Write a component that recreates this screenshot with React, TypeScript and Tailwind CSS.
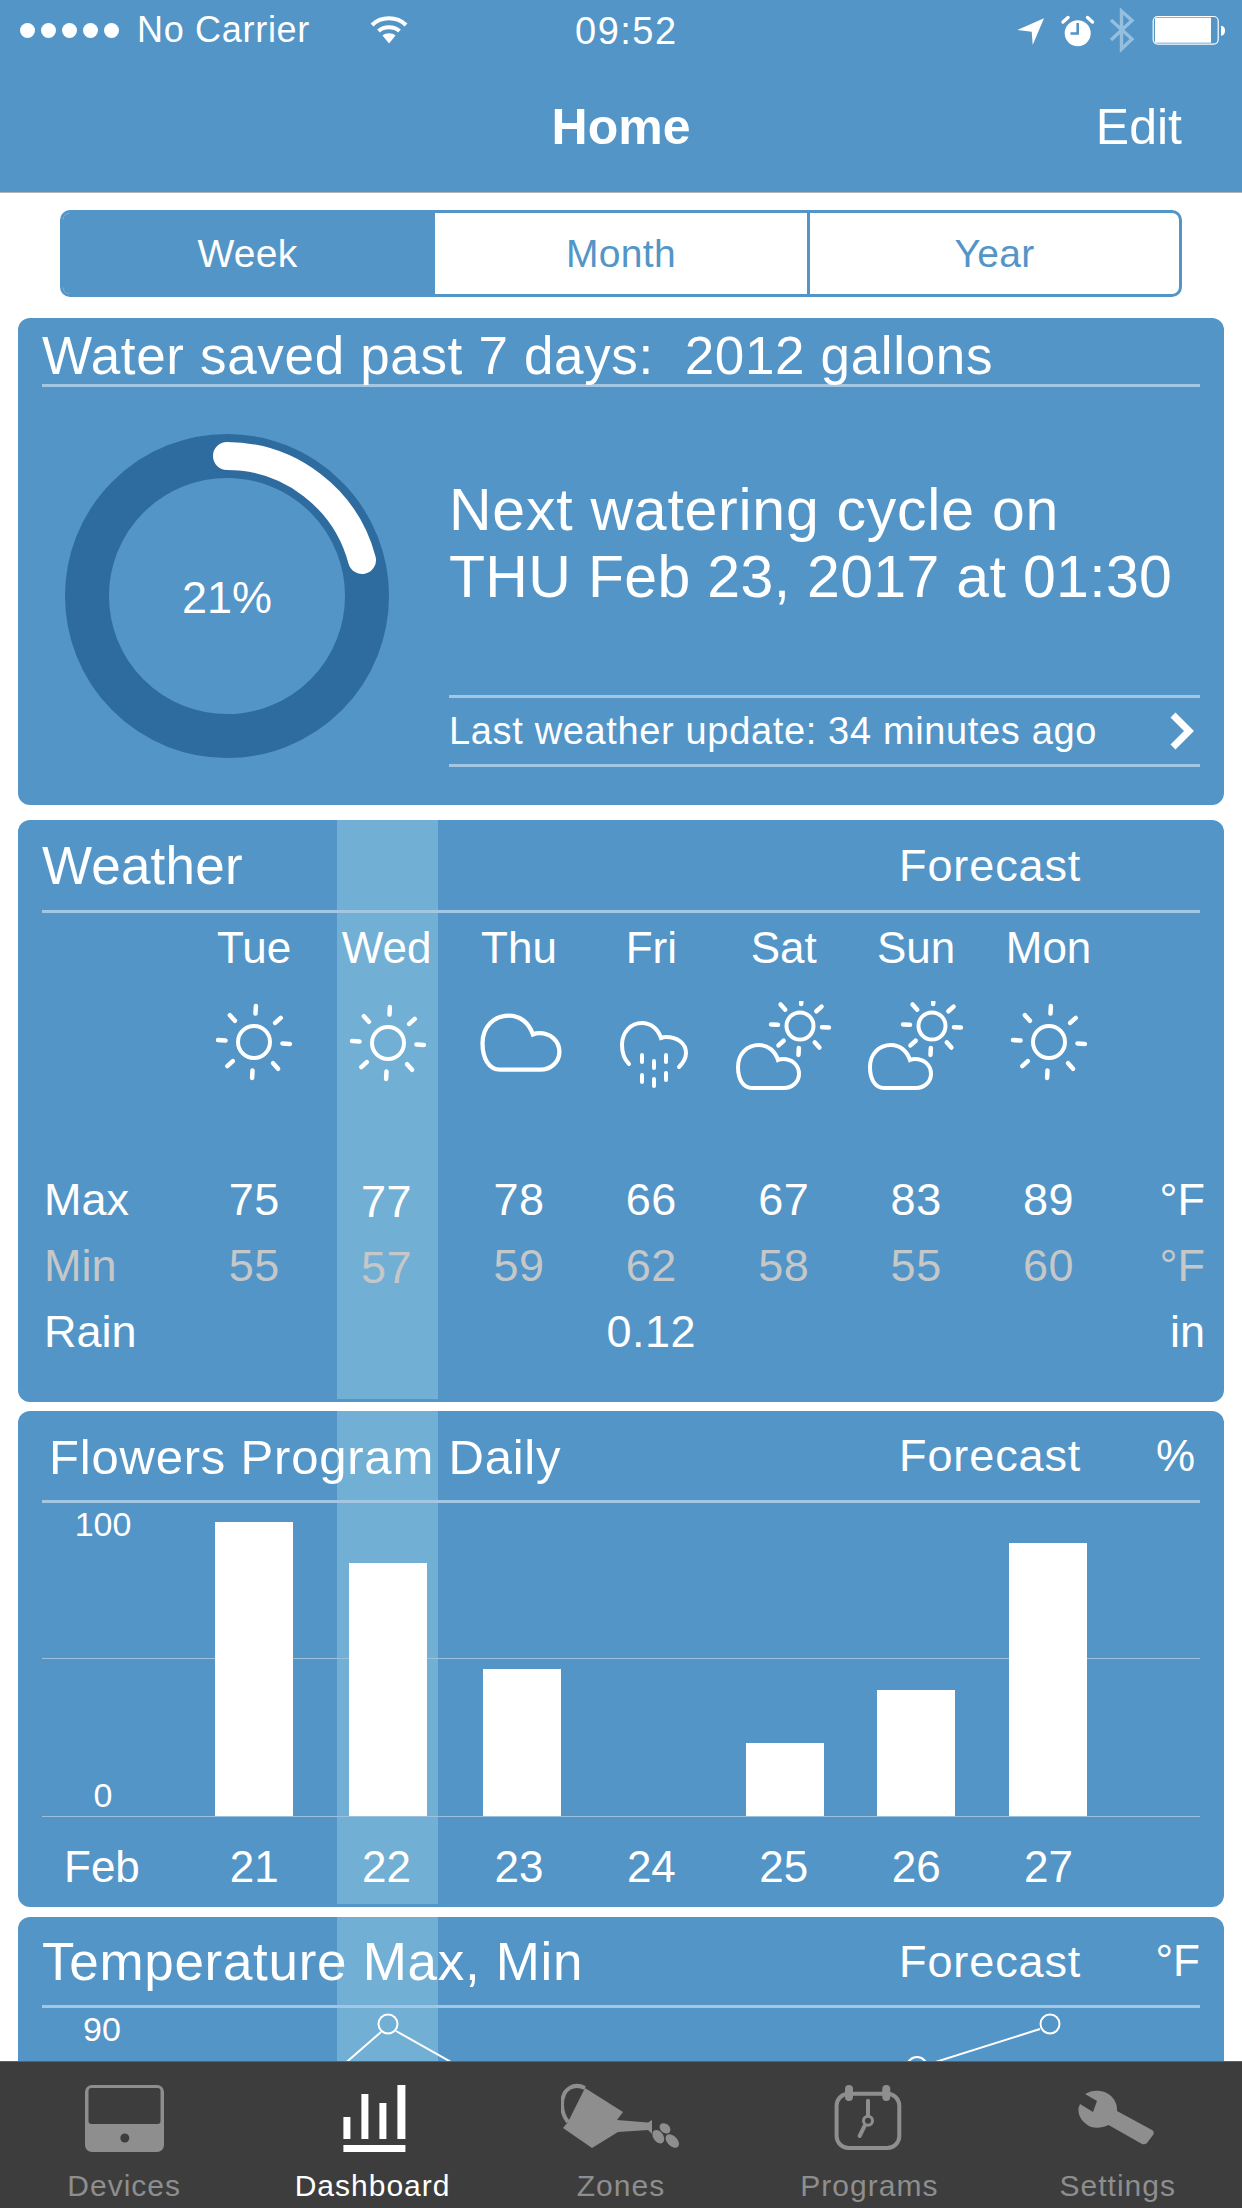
import React from 'react';

const DAYS = ['Tue', 'Wed', 'Thu', 'Fri', 'Sat', 'Sun', 'Mon'];
const MAX = ['75', '77', '78', '66', '67', '83', '89'];
const MIN = ['55', '57', '59', '62', '58', '55', '60'];
const DATES = ['21', '22', '23', '24', '25', '26', '27'];
const BARS = [294, 253, 147, 0, 73, 126, 273];

const CLOUD = 'M16 45 H48 C56 45 63 39 63 31 C63 22 56 16 47 16 C45.5 16 44 16.2 42 17 C39 8 32 2 23 2 C11 2 2 11 2 24 C2 36 7 45 16 45 Z';

const Sun: React.FC<{ cx: number; cy: number; r: number; a: number; b: number }> = ({ cx, cy, r, a, b }) => (
  <g stroke="#fff" fill="none">
    <circle cx={cx} cy={cy} r={r} strokeWidth="4" />
    {[0, 45, 90, 135, 180, 225, 270, 315].map((deg) => {
      const t = ((deg + 3) * Math.PI) / 180;
      return (
        <line
          key={deg}
          x1={cx + a * Math.sin(t)}
          y1={cy - a * Math.cos(t)}
          x2={cx + b * Math.sin(t)}
          y2={cy - b * Math.cos(t)}
          strokeWidth="4.5"
          strokeLinecap="round"
        />
      );
    })}
  </g>
);

const WeatherIcon: React.FC<{ index: number }> = ({ index }) => {
  let inner: React.ReactNode = null;
  if (index === 0 || index === 6) inner = <Sun cx={60} cy={41} r={16} a={28.5} b={36} />;
  if (index === 1) inner = <Sun cx={61} cy={42} r={16} a={28.5} b={36} />;
  if (index === 2) {
    inner = <path d={CLOUD} transform="translate(21 12) scale(1.26)" fill="none" stroke="#fff" strokeWidth="3.4" />;
  }
  if (index === 3) {
    inner = (
      <g stroke="#fff" fill="none" strokeLinecap="round">
        <path d="M38 63 C33 58 31 51 31 44 C31 31 40 22 51 22 C60 22 67 28 70 37 C71.5 36.5 73 36 75 36 C86 36 95 42 95 52 C95 57 92 62 88 66" strokeWidth="4" />
        <path d="M51 54 V61 M51 74 V81 M63 60 V67 M63 78 V85 M75 54 V61 M75 72 V79" strokeWidth="4" />
      </g>
    );
  }
  if (index === 4 || index === 5) {
    inner = (
      <>
        <Sun cx={76} cy={25} r={13.5} a={22} b={29} />
        <path d={CLOUD} transform="translate(12 42)" fill="none" stroke="#fff" strokeWidth="4" />
      </>
    );
  }
  return (
    <svg width="120" height="92" viewBox="0 0 120 92" className="mx-auto block">
      {inner}
    </svg>
  );
};

const Highlight: React.FC = () => (
  <div className="absolute left-[319px] top-0 bottom-[3px] w-[101px] bg-[#72afd5]" />
);

const CardHeader: React.FC<{
  title: string;
  titleClass?: string;
  forecast?: boolean;
  unit?: string;
  unitClass?: string;
  height: string;
}> = ({ title, titleClass, forecast, unit, unitClass, height }) => (
  <div className={`grid grid-cols-[857px_1fr_auto] items-center border-b-[3px] border-[#a3c7e2] ${height}`}>
    <div className={`whitespace-pre leading-none ${titleClass}`}>{title}</div>
    {forecast && <div className="text-[45px] leading-none tracking-[0.9px]">Forecast</div>}
    {unit && <div className={`text-[44px] leading-none ${unitClass}`}>{unit}</div>}
  </div>
);

const WeatherRow: React.FC<{ label: string; values: string[]; unit: string; color?: string }> = ({ label, values, unit, color }) => (
  <div className={`grid grid-cols-[146px_repeat(7,132.4px)_1fr] h-[66px] items-center text-[45px] leading-none ${color}`}>
    <div className="pl-[2px]">{label}</div>
    {values.map((v, i) => (
      <div key={i} className={i === 1 ? 'text-center tracking-[0.5px] mt-[4px]' : 'text-center tracking-[0.5px]'}>
        {v}
      </div>
    ))}
    <div className="text-right -mr-[5px]">{unit}</div>
  </div>
);

const StatusIcons: React.FC = () => (
  <svg width="220" height="50" viewBox="0 0 220 50" className="mr-[12px]">
    <path d="M34 13.3 L7.3 25 L21.7 26.7 L22.7 40 Z" fill="#fff" />
    <circle cx="67.7" cy="28.3" r="13" fill="#fff" />
    <path d="M67.7 18 V28.5 H60.5" stroke="#5395c7" strokeWidth="2.6" fill="none" />
    <path d="M53 17 L58 12.5 M77.5 12.5 L82.5 17" stroke="#fff" strokeWidth="3.4" strokeLinecap="round" />
    <path d="M101 15 L122 34 L111.5 44 V6 L122 15.5 L101 35" stroke="#94bfdf" strokeWidth="3.4" fill="none" />
    <rect x="143.2" y="11.5" width="65" height="27.6" rx="4.5" fill="none" stroke="#fff" strokeWidth="1.2" />
    <rect x="145" y="12.7" width="56" height="25" fill="#fff" />
    <path d="M211 20.7 C214 21 215 23 215 25.7 C215 28 214 30.5 211 30.7 Z" fill="#fff" />
  </svg>
);

const WifiIcon: React.FC = () => (
  <svg width="38" height="28" viewBox="0 0 38 28">
    <path d="M2 9 C11 0 27 0 36 9 M8.5 15 C14 10 24 10 29.5 15" stroke="#fff" strokeWidth="4" fill="none" />
    <path d="M12.5 19.5 C16 16.5 22 16.5 25.5 19.5 L19 27.5 Z" fill="#fff" />
  </svg>
);

const Ring: React.FC = () => (
  <svg width="324" height="324" viewBox="0 0 324 324" className="block">
    <circle cx="162" cy="162" r="140" fill="none" stroke="#2e6ca0" strokeWidth="44" />
    <path d="M162 22 A140 140 0 0 1 297 126" fill="none" stroke="#fff" strokeWidth="28" strokeLinecap="round" />
  </svg>
);

const TAB_GREY = '#8e8e8e';

const TABS: { label: string; active?: boolean; icon: React.ReactNode }[] = [
  {
    label: 'Devices',
    icon: (
      <>
        <rect x="21" y="2" width="79" height="67" rx="7" fill={TAB_GREY} />
        <rect x="24.5" y="5" width="72" height="36" rx="3" fill="#3d3d3d" />
        <circle cx="60.8" cy="55" r="4.5" fill="#3d3d3d" />
      </>
    ),
  },
  {
    label: 'Dashboard',
    active: true,
    icon: (
      <g fill="#fff">
        <rect x="30.4" y="34" width="7" height="22" />
        <rect x="48.4" y="11" width="7" height="45" />
        <rect x="66.4" y="20" width="7" height="36" />
        <rect x="84.4" y="2" width="8" height="54" />
        <rect x="30.4" y="62" width="62" height="7" />
      </g>
    ),
  },
  {
    label: 'Zones',
    icon: (
      <>
        <path d="M24 5 C14 0 1 4 1 22 C1 28 3 34 7 39" fill="none" stroke={TAB_GREY} strokeWidth="4" />
        <path d="M24 5 L62 29 L56 37 L87 39.5 L91 37 L91 51 L87 47 L57 49 L31 65 L2 45 L7 39 Z" fill={TAB_GREY} />
        <ellipse cx="104" cy="45.3" rx="6" ry="4.5" transform="rotate(40 104 45.3)" fill={TAB_GREY} />
        <ellipse cx="97.3" cy="53.7" rx="7.5" ry="5" transform="rotate(55 97.3 53.7)" fill={TAB_GREY} />
        <ellipse cx="111.3" cy="58" rx="8" ry="5" transform="rotate(45 111.3 58)" fill={TAB_GREY} />
      </>
    ),
  },
  {
    label: 'Programs',
    icon: (
      <g stroke={TAB_GREY} fill="none">
        <rect x="27.6" y="10.7" width="62.7" height="54.3" rx="12" strokeWidth="4" />
        <path d="M40 6 V14 M77.3 6 V14" strokeWidth="8" strokeLinecap="round" />
        <circle cx="59" cy="37.7" r="4.5" strokeWidth="3" />
        <path d="M59 33 V17.7 M55.6 43 L50.6 53" strokeWidth="4" strokeLinecap="round" />
      </g>
    ),
  },
  {
    label: 'Settings',
    icon: (
      <path
        d="M27 11 C32 8 37 7 42 8 C52 9 60 18 59 28 L94 47 Q97 49 95 52 L89 60 Q87 62 84 61 L50.5 42 C42 46 33 46 27 40 C22 36 20 30 20.5 25 L22 21 L35 29 L39 18 Z"
        fill={TAB_GREY}
      />
    ),
  },
];

export default function App() {
  return (
    <div className="w-[1242px] h-[2208px] flex flex-col overflow-hidden bg-white text-white [font-family:'Liberation_Sans',sans-serif]">
      <main className="flex-1 min-h-0 overflow-hidden">
        {/* status + nav */}
        <header className="h-[193px] bg-[#5395c7] border-b border-[#b5b5b5]">
          <div className="grid grid-cols-[555px_125px_1fr] h-[60px] items-center pl-[20px]">
            <div className="flex items-center">
              <div className="flex gap-[6px]">
                {[0, 1, 2, 3, 4].map((i) => (
                  <div key={i} className="w-[15px] h-[15px] rounded-full bg-white" />
                ))}
              </div>
              <span className="ml-[18px] text-[36px] leading-none tracking-[0.7px]">No Carrier</span>
              <div className="ml-[60px]">
                <WifiIcon />
              </div>
            </div>
            <div className="text-[38px] leading-none tracking-[1.5px] pt-[2px]">09:52</div>
            <div className="justify-self-end">
              <StatusIcons />
            </div>
          </div>
          <div className="grid grid-cols-[1fr_auto_1fr] items-center h-[134px]">
            <div />
            <div className="text-[50px] font-bold leading-none">Home</div>
            <div className="justify-self-end pr-[60px] text-[50px] leading-none">Edit</div>
          </div>
        </header>

        {/* range tabs */}
        <div className="mx-[60px] mt-[17px] h-[87px] grid grid-cols-[372px_375px_1fr] border-[3px] border-[#5395c7] rounded-[10px] overflow-hidden text-[39px] tracking-[0.3px] text-[#5395c7]">
          <div className="flex items-center justify-center pt-[2px] pr-[3px] bg-[#5395c7] text-white">Week</div>
          <div className="flex items-center justify-center pt-[2px] border-r-[3px] border-[#5395c7]">Month</div>
          <div className="flex items-center justify-center pt-[2px]">Year</div>
        </div>

        {/* water saved */}
        <section className="mx-[18px] mt-[21px] h-[487px] bg-[#5395c7] rounded-[12px] px-[24px]">
          <div className="h-[69px] flex items-center pt-[8px] border-b-[3px] border-[#a3c7e2]">
            <div className="whitespace-pre text-[53px] tracking-[0.66px] leading-none">Water saved past 7 days:  2012 gallons</div>
          </div>
          <div className="flex mt-[47px]">
            <div className="relative ml-[23px] w-[324px] h-[324px] shrink-0">
              <Ring />
              <div className="absolute inset-0 flex items-center justify-center pt-[3px] text-[45px] leading-none">21%</div>
            </div>
            <div className="ml-[60px] flex-1 flex flex-col">
              <div className="mt-[43px] text-[59px] leading-[67px] whitespace-nowrap">
                <div className="tracking-[0.75px]">Next watering cycle on</div>
                <div className="tracking-[0.33px]">THU Feb 23, 2017 at 01:30</div>
              </div>
              <div className="mt-[84px] h-[72px] flex items-center justify-between border-y-[3px] border-[#a3c7e2]">
                <span className="text-[38px] tracking-[0.65px] leading-none">Last weather update: 34 minutes ago</span>
                <svg width="24" height="38" viewBox="0 0 24 38" className="mr-[6px]">
                  <path d="M3 3 L19 19 L3 35" fill="none" stroke="#fff" strokeWidth="7" />
                </svg>
              </div>
            </div>
          </div>
        </section>

        {/* weather */}
        <section className="relative mx-[18px] mt-[15px] h-[582px] bg-[#5395c7] rounded-[12px] overflow-hidden">
          <Highlight />
          <div className="relative px-[24px]">
            <CardHeader title="Weather" titleClass="text-[53px] tracking-[0.2px]" forecast height="h-[93px]" />
            <div className="grid grid-cols-[146px_repeat(7,132.4px)_1fr] h-[70px] items-center text-[44px] leading-none">
              <div />
              {DAYS.map((d) => (
                <div key={d} className="text-center">
                  {d}
                </div>
              ))}
            </div>
            <div className="grid grid-cols-[146px_repeat(7,132.4px)_1fr] h-[92px] mb-[73px] mt-[18px]">
              <div />
              {DAYS.map((d, i) => (
                <WeatherIcon key={d} index={i} />
              ))}
            </div>
            <WeatherRow label="Max" values={MAX} unit="°F" />
            <WeatherRow label="Min" values={MIN} unit="°F" color="text-[#c5c7c9]" />
            <WeatherRow label="Rain" values={['', '', '', '0.12', '', '', '']} unit="in" />
          </div>
        </section>

        {/* program */}
        <section className="relative mx-[18px] mt-[9px] h-[496px] bg-[#5395c7] rounded-[12px] overflow-hidden">
          <Highlight />
          <div className="relative px-[24px]">
            <CardHeader
              title="Flowers Program Daily"
              titleClass="text-[49px] pl-[7px] pt-[4px] tracking-[0.8px]"
              forecast
              unit="%"
              unitClass="pr-[5px]"
              height="h-[92px]"
            />
            <div className="relative h-[314px] border-b border-[#9bc1de] grid grid-cols-[173px_134px_134px_134px_129px_131px_132px_78px_1fr] items-end">
              <div className="absolute left-0 right-0 top-[155px] h-px bg-[#9bc1de]" />
              <div className="relative w-[122px] h-full flex flex-col items-center justify-between py-[4px] text-[34px] leading-none">
                <span>100</span>
                <span>0</span>
              </div>
              {BARS.map((h, i) => (
                <div key={i} className="relative">
                  <div className="w-[78px] bg-white" style={{ height: h }} />
                </div>
              ))}
            </div>
            <div className="grid grid-cols-[146px_repeat(7,132.4px)_1fr] h-[100px] items-center text-[44px] leading-none">
              <div className="pl-[22px]">Feb</div>
              {DATES.map((d) => (
                <div key={d} className="text-center">
                  {d}
                </div>
              ))}
            </div>
          </div>
        </section>

        {/* temperature, runs under the tab bar */}
        <section className="relative mx-[18px] mt-[10px] h-[300px] bg-[#5395c7] rounded-[12px] overflow-hidden">
          <Highlight />
          <div className="relative px-[24px]">
            <CardHeader title="Temperature Max, Min" titleClass="text-[53px] tracking-[0.7px]" forecast unit="°F" height="h-[91px]" />
            <div className="mt-[3px] ml-[41px] text-[34px] leading-[36px]">90</div>
          </div>
          <svg className="absolute left-0 top-0" width="1206" height="300" viewBox="0 0 1206 300" fill="none" stroke="#fff" strokeWidth="2">
            <circle cx="370" cy="107" r="9.5" />
            <path d="M363 115 L300 170 M378 114 L520 194" />
            <circle cx="899" cy="150" r="10" />
            <circle cx="1032" cy="107" r="9.5" />
            <path d="M1022 112 L908 148" />
          </svg>
        </section>
      </main>

      {/* tab bar */}
      <nav className="h-[147px] shrink-0 grid grid-cols-5 bg-[#3d3d3d] border-t border-[#3f6a8c]">
        {TABS.map((t) => (
          <div key={t.label} className="flex flex-col items-center pt-[21px]">
            <svg width="120" height="72" viewBox="0 0 120 72">
              {t.icon}
            </svg>
            <div className={`mt-[16px] text-[30px] leading-none tracking-[1px] ${t.active ? 'text-white' : 'text-[#8e8e8e]'}`}>
              {t.label}
            </div>
          </div>
        ))}
      </nav>
    </div>
  );
}
